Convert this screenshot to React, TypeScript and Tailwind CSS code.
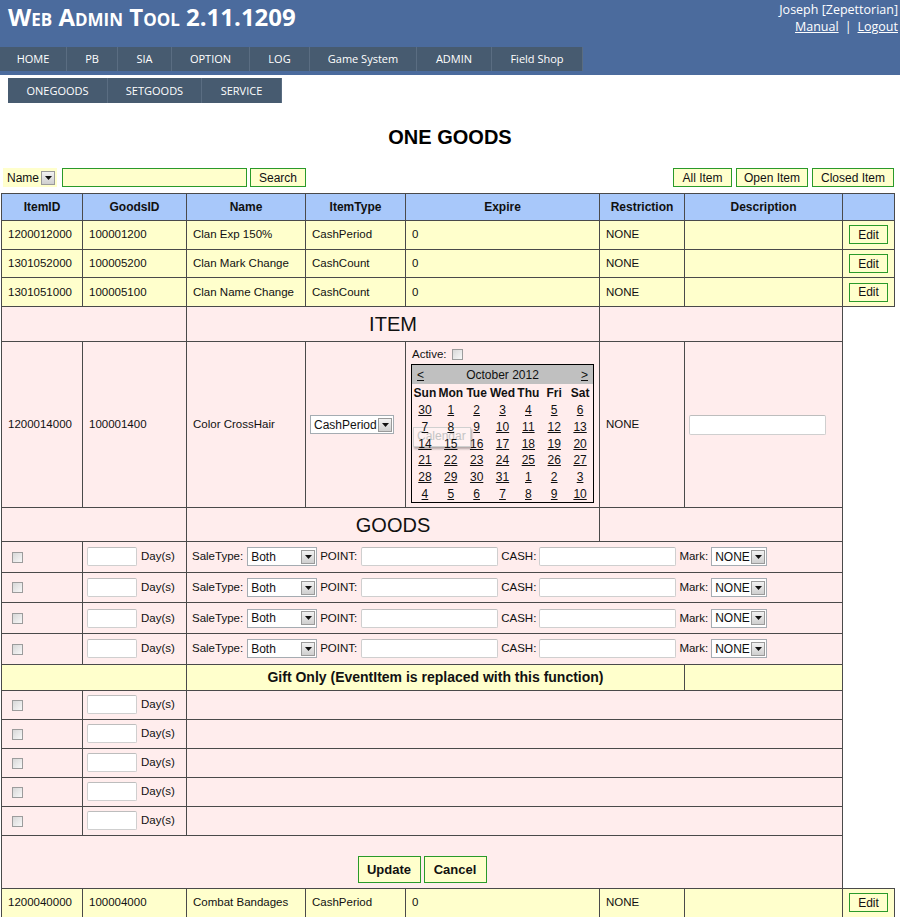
import React from "react";

const nav = [
  { label: "HOME", w: "w-[67px]" },
  { label: "PB", w: "w-[51px]" },
  { label: "SIA", w: "w-[54px]" },
  { label: "OPTION", w: "w-[78px]" },
  { label: "LOG", w: "w-[60px]" },
  { label: "Game System", w: "w-[107px]" },
  { label: "ADMIN", w: "w-[75px]" },
  { label: "Field Shop", w: "w-[91px]" },
];

const subNav = [
  { label: "ONEGOODS", w: "w-[100px]" },
  { label: "SETGOODS", w: "w-[94px]" },
  { label: "SERVICE", w: "w-[80px]" },
];

const rows = [
  { itemId: "1200012000", goodsId: "100001200", name: "Clan Exp 150%", type: "CashPeriod" },
  { itemId: "1301052000", goodsId: "100005200", name: "Clan Mark Change", type: "CashCount" },
  { itemId: "1301051000", goodsId: "100005100", name: "Clan Name Change", type: "CashCount" },
];

const calendar = [
  ["30", "1", "2", "3", "4", "5", "6"],
  ["7", "8", "9", "10", "11", "12", "13"],
  ["14", "15", "16", "17", "18", "19", "20"],
  ["21", "22", "23", "24", "25", "26", "27"],
  ["28", "29", "30", "31", "1", "2", "3"],
  ["4", "5", "6", "7", "8", "9", "10"],
];

const td = "border border-[#4a4a4a] px-[6px]";

// old windows style pieces
function Check() {
  return (
    <span className="inline-block align-middle w-[11px] h-[11px] border border-[#9c9c9c] bg-gradient-to-br from-[#d8d8d8] to-[#f8f8f8]" />
  );
}

function Arrow() {
  return (
    <span className="flex shrink-0 items-center justify-center w-[14px] h-[14px] mr-px border border-[#9a9a9a] bg-gradient-to-b from-[#f2f2f2] to-[#cfcfcf]">
      <svg width="7" height="4" viewBox="0 0 7 4">
        <path d="M0 0h7L3.5 4z" fill="#111" />
      </svg>
    </span>
  );
}

function Select({ text, className }: { text: string; className: string }) {
  return (
    <span
      className={`inline-flex items-center justify-between align-middle h-[19px] border border-[#a5acb2] bg-white pl-[3px] text-[12px] ${className}`}
    >
      <span>{text}</span>
      <Arrow />
    </span>
  );
}

function Input({ className }: { className: string }) {
  return (
    <span
      className={`inline-block align-middle h-[19px] bg-white border border-[#cfcfcf] border-t-[#bdbdbd] rounded-[2px] ${className}`}
    />
  );
}

function GreenBtn({ children, className }: { children: React.ReactNode; className: string }) {
  return (
    <button className={`h-[19px] border border-[#2a9a2a] bg-[#ffffcc] text-[12px] text-[#111] leading-none ${className}`}>
      {children}
    </button>
  );
}

function DataRow({ r }: { r: (typeof rows)[number] }) {
  return (
    <tr className="h-[28.7px] bg-[#ffffcc]">
      <td className={td}>{r.itemId}</td>
      <td className={td}>{r.goodsId}</td>
      <td className={td}>{r.name}</td>
      <td className={td}>{r.type}</td>
      <td className={td}>0</td>
      <td className={td}>NONE</td>
      <td className={td}></td>
      <td className={`${td} text-center`}>
        <GreenBtn className="w-[39px]">Edit</GreenBtn>
      </td>
    </tr>
  );
}

function DaysCell() {
  return (
    <td className={`${td} pl-[4px]`}>
      <Input className="w-[50px]" />
      <span className="ml-[4px] align-middle">Day(s)</span>
    </td>
  );
}

export default function App() {
  return (
    <div className="min-h-[917px] bg-white font-['Liberation_Sans',Arial,sans-serif] text-[#111]">
      {/* top bar */}
      <header className="bg-[#4b6b9d] h-[75px] flex flex-col">
        <div className="h-[47px] flex justify-between">
          <h1 className="pl-[8px] pt-[1px] font-['Open_Sans',sans-serif] font-bold text-[24px] leading-[32px] text-white [font-variant:small-caps]">
            Web Admin Tool 2.11.1209
          </h1>
          <div className="pr-[2px] pt-[1px] text-right font-['Open_Sans',sans-serif] text-[12.5px] leading-[17px] text-white">
            <div>Joseph [Zepettorian]</div>
            <div>
              <a className="underline">Manual</a>
              <span className="mx-[6px]">|</span>
              <a className="underline">Logout</a>
            </div>
          </div>
        </div>
        <nav className="flex h-[24px]">
          {nav.map((n) => (
            <span
              key={n.label}
              className={`${n.w} flex items-center justify-center pt-px bg-[#475b70] border-r border-[#5a6d82] font-['Open_Sans',sans-serif] text-[11px] text-white`}
            >
              {n.label}
            </span>
          ))}
        </nav>
      </header>

      <nav className="flex ml-[8px] mt-[3px] h-[25px]">
        {subNav.map((n) => (
          <span
            key={n.label}
            className={`${n.w} flex items-center justify-center pt-px bg-[#475b70] border-r border-[#5a6d82] font-['Open_Sans',sans-serif] text-[11px] text-white`}
          >
            {n.label}
          </span>
        ))}
      </nav>

      <h2 className="mt-[22px] text-center font-bold text-[20px] leading-[24px] text-black">ONE GOODS</h2>

      {/* search row */}
      <div className="mt-[19px] flex items-center justify-between pl-[3px] pr-[6px] h-[19px]">
        <div className="flex items-center">
          <span className="inline-flex items-center h-[19px] w-[54px] bg-[#ffffcc] pl-[4px] text-[12px] gap-[2px]">
            Name
            <Arrow />
          </span>
          <span className="ml-[5px] h-[19px] w-[185px] border border-[#2a9a2a] bg-[#ffffcc]" />
          <GreenBtn className="ml-[3px] w-[56px]">Search</GreenBtn>
        </div>
        <div className="flex items-center gap-[3px]">
          <GreenBtn className="w-[59px]">All Item</GreenBtn>
          <GreenBtn className="w-[72px] ml-px">Open Item</GreenBtn>
          <GreenBtn className="w-[82px] ml-px">Closed Item</GreenBtn>
        </div>
      </div>

      <table className="mt-[6px] ml-px border-collapse table-fixed w-[893px] text-[11.5px]">
        <colgroup>
          <col className="w-[81px]" />
          <col className="w-[104px]" />
          <col className="w-[119px]" />
          <col className="w-[100px]" />
          <col className="w-[194px]" />
          <col className="w-[85px]" />
          <col className="w-[158px]" />
          <col className="w-[52px]" />
        </colgroup>
        <thead>
          <tr className="h-[27px] bg-[#a8c8fa] text-[12px] font-bold">
            <th className={td}>ItemID</th>
            <th className={td}>GoodsID</th>
            <th className={td}>Name</th>
            <th className={td}>ItemType</th>
            <th className={td}>Expire</th>
            <th className={`${td} px-0`}>Restriction</th>
            <th className={td}>Description</th>
            <th className={td}></th>
          </tr>
        </thead>
        <tbody>
          {rows.map((r) => (
            <DataRow key={r.itemId} r={r} />
          ))}

          {/* edit form */}
          <tr className="h-[35px] bg-[#ffeded]">
            <td className={td} colSpan={2}></td>
            <td className={`${td} text-center text-[20px]`} colSpan={3}>ITEM</td>
            <td className={td} colSpan={2}></td>
          </tr>
          <tr className="h-[166px] bg-[#ffeded]">
            <td className={td}>1200014000</td>
            <td className={td}>100001400</td>
            <td className={td}>Color CrossHair</td>
            <td className={`${td} pl-[4px]`}>
              <Select text="CashPeriod" className="w-[84px]" />
            </td>
            <td className={`${td} pl-[5px] align-top pt-[6px]`}>
              <div className="flex items-center h-[14px] pl-px">
                <span>Active:</span>
                <span className="ml-[5px] mt-[-1px]">
                  <Check />
                </span>
              </div>
              <div className="relative mt-[2px] w-[183px] border border-black text-[12px]">
                <div className="flex justify-between items-center h-[19px] bg-[#c0c0c0] px-[5px]">
                  <span className="underline">&lt;</span>
                  <span>October 2012</span>
                  <span className="underline">&gt;</span>
                </div>
                <div className="grid grid-cols-7 h-[17px] items-center font-bold text-center">
                  {["Sun", "Mon", "Tue", "Wed", "Thu", "Fri", "Sat"].map((d) => (
                    <span key={d}>{d}</span>
                  ))}
                </div>
                {calendar.map((week, i) => (
                  <div key={i} className="grid grid-cols-7 h-[16.8px] items-center text-center">
                    {week.map((d, j) => (
                      <span key={j} className="relative z-10 underline">
                        {d}
                      </span>
                    ))}
                  </div>
                ))}
                {/* hover tooltip left over in the screenshot */}
                <span className="absolute left-[1px] top-[62px] w-[58px] h-[20px] bg-white/30 border border-[#d0d0d0] shadow-[1px_2px_2px_rgba(0,0,0,0.3)] text-[#c4c4c4] text-[12px] leading-[17px] pl-[3px]">
                  Calendar
                </span>
              </div>
            </td>
            <td className={td}>NONE</td>
            <td className={`${td} pl-[4px]`}>
              <Input className="w-[137px] h-[20px]" />
            </td>
          </tr>
          <tr className="h-[34px] bg-[#ffeded]">
            <td className={td} colSpan={2}></td>
            <td className={`${td} text-center text-[20px]`} colSpan={3}>GOODS</td>
            <td className={td} colSpan={2}></td>
          </tr>
          {[0, 1, 2, 3].map((i) => (
            <tr key={i} className="h-[30.7px] bg-[#ffeded]">
              <td className={`${td} pl-[10px]`}>
                <Check />
              </td>
              <DaysCell />
              <td className={`${td} pl-[5px] whitespace-nowrap`} colSpan={5}>
                <span className="align-middle">SaleType:</span>
                <Select text="Both" className="ml-[4px] w-[70px]" />
                <span className="ml-[3px] align-middle">POINT:</span>
                <Input className="ml-[4px] w-[137px]" />
                <span className="ml-[3px] align-middle">CASH:</span>
                <Input className="ml-[3px] w-[137px]" />
                <span className="ml-[3px] align-middle">Mark:</span>
                <Select text="NONE" className="ml-[3px] w-[56px]" />
              </td>
            </tr>
          ))}
          <tr className="h-[26px] bg-[#ffffcc]">
            <td className={td} colSpan={2}></td>
            <td className={`${td} text-center font-bold text-[14px]`} colSpan={4}>
              Gift Only (EventItem is replaced with this function)
            </td>
            <td className={td}></td>
          </tr>
          {[0, 1, 2, 3, 4].map((i) => (
            <tr key={i} className="h-[29px] bg-[#ffeded]">
              <td className={`${td} pl-[10px]`}>
                <Check />
              </td>
              <DaysCell />
              <td className={td} colSpan={5}></td>
            </tr>
          ))}
          <tr className="h-[53px] bg-[#ffeded]">
            <td className={`${td} text-center align-bottom pb-[5px]`} colSpan={7}>
              <button className="w-[63px] h-[27px] border border-[#2a9a2a] bg-[#ffffcc] font-bold text-[13px]">
                Update
              </button>
              <button className="ml-[3px] w-[63px] h-[27px] border border-[#2a9a2a] bg-[#ffffcc] font-bold text-[13px]">
                Cancel
              </button>
            </td>
          </tr>
          <DataRow r={{ itemId: "1200040000", goodsId: "100004000", name: "Combat Bandages", type: "CashPeriod" }} />
        </tbody>
      </table>
    </div>
  );
}
